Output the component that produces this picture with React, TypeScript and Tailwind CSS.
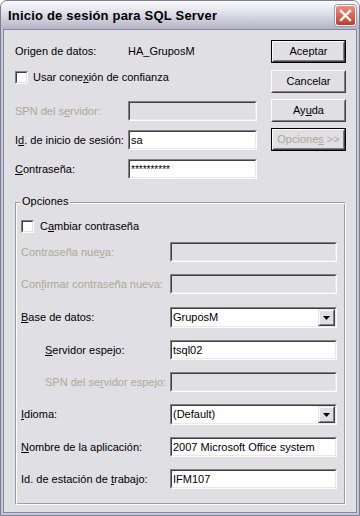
import React from "react";

function U({ children }: { children: React.ReactNode }) {
  return <span className="underline">{children}</span>;
}

function Field({
  w,
  h = 20,
  disabled,
  children,
}: {
  w: number;
  h?: number;
  disabled?: boolean;
  children?: React.ReactNode;
}) {
  return (
    <div
      className="border border-t-[#808080] border-l-[#808080] border-b-white border-r-white"
      style={{ width: w, height: h }}
    >
      <div
        className={`flex h-full items-center border border-t-[#404040] border-l-[#404040] border-b-[#ece9e4] border-r-[#ece9e4] pl-[1px] text-black ${
          disabled ? "bg-[#e0dfe3]" : "bg-white"
        }`}
      >
        {children}
      </div>
    </div>
  );
}

function Combo({ w, value }: { w: number; value: string }) {
  return (
    <div
      className="border border-t-[#808080] border-l-[#808080] border-b-white border-r-white"
      style={{ width: w, height: 21 }}
    >
      <div className="flex h-full items-center border border-t-[#404040] border-l-[#404040] border-b-[#ece9e4] border-r-[#ece9e4] bg-white pl-[1px]">
        <span className="flex-1">{value}</span>
        <div className="h-full w-[17px] border border-t-[#e0dfe3] border-l-[#e0dfe3] border-b-[#404040] border-r-[#404040]">
          <div className="flex h-full items-center justify-center border border-t-white border-l-white border-b-[#808080] border-r-[#808080] bg-[#e0dfe3]">
            <svg width="7" height="4" viewBox="0 0 7 4">
              <path d="M0 0h7L3.5 4z" fill="#000" />
            </svg>
          </div>
        </div>
      </div>
    </div>
  );
}

function Check() {
  return (
    <div className="h-[13px] w-[13px] shrink-0 border border-t-[#808080] border-l-[#808080] border-b-white border-r-white">
      <div className="h-full border border-t-[#404040] border-l-[#404040] border-b-[#e0dfe3] border-r-[#e0dfe3] bg-white" />
    </div>
  );
}

function Btn({
  children,
  isDefault,
  disabled,
  className = "",
}: {
  children: React.ReactNode;
  isDefault?: boolean;
  disabled?: boolean;
  className?: string;
}) {
  return (
    <div className={`h-[23px] w-[75px] ${isDefault ? "border border-black" : ""} ${className}`}>
      <div className="h-full border border-t-white border-l-white border-b-[#404040] border-r-[#404040]">
        <div
          className={`flex h-full items-center justify-center border border-t-[#e0dfe3] border-l-[#e0dfe3] border-b-[#808080] border-r-[#808080] bg-[#e0dfe3] ${
            disabled ? "text-[#aca899]" : "text-black"
          }`}
        >
          {children}
        </div>
      </div>
    </div>
  );
}

export default function App() {
  return (
    <div className="h-[516px] w-[360px] bg-white font-['Liberation_Sans',Arial,sans-serif] text-[11px] leading-[13px] text-black">
      <div className="flex h-full flex-col overflow-hidden rounded-t-[7px] border border-[#7c7c96] bg-[#c6c6d4]">
        {/* title bar */}
        <div className="flex h-[28px] shrink-0 items-center justify-between bg-linear-to-b from-[#fbfbfd] via-[#dadae4] to-[#b4b4c6] pl-[7px] pr-[3px]">
          <span className="text-[13px] font-bold tracking-[0.2px] text-black">Inicio de sesión para SQL Server</span>
          <div className="flex h-[21px] w-[21px] items-center justify-center rounded-[3px] border border-white bg-linear-to-b from-[#ec8c7a] to-[#c23a26] shadow-[0_0_0_1px_#9c9cb2]">
            <svg width="13" height="13" viewBox="0 0 13 13">
              <path d="M2 2L11 11M11 2L2 11" stroke="#fff" strokeWidth="2.4" strokeLinecap="square" />
            </svg>
          </div>
        </div>

        {/* frame */}
        <div className="flex-1 px-[2px] pb-[2px]">
          <div className="h-full border border-[#8888a0] bg-[#e0dfe3]">
            {/* top section */}
            <div className="flex">
              <div className="pl-[11px]">
                <div className="mt-[11px] flex h-[20px] items-center">
                  <span className="w-[113px]">Origen de datos:</span>
                  <span>HA_GruposM</span>
                </div>
                <div className="mt-[6px] flex h-[20px] items-center">
                  <Check />
                  <span className="ml-[5px]">
                    Usar cone<U>x</U>ión de confianza
                  </span>
                </div>
                <div className="mt-[14px] flex h-[20px] items-center">
                  <span className="w-[113px] text-[#aca899]">
                    SPN del s<U>e</U>rvidor:
                  </span>
                  <Field w={129} disabled />
                </div>
                <div className="mt-[9px] flex h-[20px] items-center">
                  <span className="w-[113px]">
                    I<U>d</U>. de inicio de sesión:
                  </span>
                  <Field w={129}>sa</Field>
                </div>
                <div className="mt-[9px] flex h-[20px] items-center">
                  <span className="w-[113px]">
                    <U>C</U>ontraseña:
                  </span>
                  <Field w={129}>
                    <span className="text-[10px]">**********</span>
                  </Field>
                </div>
              </div>
              <div className="ml-auto mr-[10px] flex flex-col">
                <Btn isDefault className="mt-[10px]">
                  Aceptar
                </Btn>
                <Btn className="mt-[7px]">Cancelar</Btn>
                <Btn className="mt-[6px]">
                  Ay<U>u</U>da
                </Btn>
                <Btn isDefault disabled className="mt-[6px]">
                  <span className="whitespace-pre">
                    Opcione<U>s</U>{" >>"}
                  </span>
                </Btn>
              </div>
            </div>

            {/* Opciones group */}
            <div className="relative ml-[11px] mt-[23px] h-[303px] w-[331px] border border-t-[#9d9da1] border-l-[#9d9da1] border-b-white border-r-white pl-[5px] shadow-[inset_1px_1px_0_#fff,inset_-1px_-1px_0_#9d9da1]">
              <span className="absolute -top-[8px] left-[4px] bg-[#e0dfe3] px-[2px]">Opciones</span>

              <div className="mt-[13px] flex h-[20px] items-center">
                <Check />
                <span className="ml-[6px]">
                  C<U>a</U>mbiar contraseña
                </span>
              </div>
              <div className="mt-[6px] flex h-[20px] items-center">
                <span className="w-[149px] text-[#aca899]">
                  Contraseña nue<U>v</U>a:
                </span>
                <Field w={167} disabled />
              </div>
              <div className="mt-[12px] flex h-[20px] items-center">
                <span className="w-[149px] text-[#aca899]">
                  Con<U>f</U>irmar contraseña nueva:
                </span>
                <Field w={167} disabled />
              </div>
              <div className="mt-[13px] flex h-[21px] items-center">
                <span className="w-[149px]">
                  <U>B</U>ase de datos:
                </span>
                <Combo w={167} value="GruposM" />
              </div>
              <div className="mt-[12px] flex h-[20px] items-center">
                <span className="w-[149px] pl-[24px]">
                  <U>S</U>ervidor espejo:
                </span>
                <Field w={167}>tsql02</Field>
              </div>
              <div className="mt-[12px] flex h-[20px] items-center">
                <span className="w-[149px] pl-[24px] text-[#aca899]">
                  SPN del se<U>r</U>vidor espejo:
                </span>
                <Field w={167} disabled />
              </div>
              <div className="mt-[12px] flex h-[21px] items-center">
                <span className="w-[149px]">
                  <U>I</U>dioma:
                </span>
                <Combo w={167} value="(Default)" />
              </div>
              <div className="mt-[12px] flex h-[20px] items-center">
                <span className="w-[149px]">
                  <U>N</U>ombre de la aplicación:
                </span>
                <Field w={167}>2007 Microsoft Office system</Field>
              </div>
              <div className="mt-[12px] flex h-[20px] items-center">
                <span className="w-[149px]">
                  Id. de estación de <U>t</U>rabajo:
                </span>
                <Field w={167}>IFM107</Field>
              </div>
            </div>
          </div>
        </div>
      </div>
    </div>
  );
}
